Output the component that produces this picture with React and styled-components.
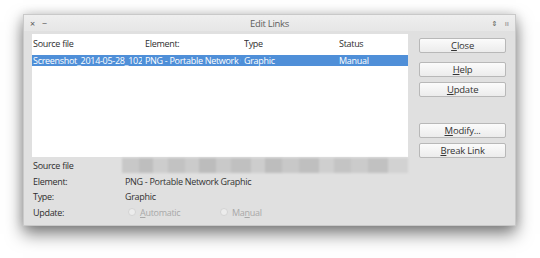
import React from 'react'
import styled, { createGlobalStyle } from 'styled-components'

const Global = createGlobalStyle`
  html, body {
    margin: 0;
    background: #ffffff;
  }
  body {
    font-family: "Open Sans", "DejaVu Sans", sans-serif;
    font-size: 9px;
    letter-spacing: -0.3px;
    color: #333;
  }
`

const Page = styled.div`
  width: 540px;
  height: 258px;
  padding: 14px 0 0 23px;
  box-sizing: border-box;
`

const Window = styled.div`
  width: 493px;
  height: 212px;
  background: #e0e0e0;
  border: 1px solid #c9c9c9;
  box-sizing: border-box;
  display: flex;
  flex-direction: column;
  box-shadow: 0 8px 16px rgba(0, 0, 0, 0.5), 0 0 10px rgba(0, 0, 0, 0.15);
`

const TitleBar = styled.div`
  height: 16px;
  display: grid;
  grid-template-columns: 60px 1fr 60px;
  align-items: center;
  background: linear-gradient(#efefef, #e6e6e6);
  color: #5e5e5e;
  font-size: 9.5px;
`

const Controls = styled.div`
  display: flex;
  gap: 7px;
  padding: 0 6px;
  justify-content: ${p => (p.$right ? 'flex-end' : 'flex-start')};
  color: #555;
  font-size: ${p => (p.$right ? '7px' : '9px')};
`

const Title = styled.div`
  text-align: center;
`

const Body = styled.div`
  flex: 1;
  display: flex;
  gap: 11px;
  padding: 3px 9px 0 8px;
`

const Left = styled.div`
  width: 377px;
  display: flex;
  flex-direction: column;
`

const List = styled.div`
  height: 123px;
  background: #ffffff;
  display: flex;
  flex-direction: column;
`

const Row = styled.div`
  display: grid;
  grid-template-columns: 112px 99px 95px 1fr;
  height: ${p => (p.$head ? '19px' : '11px')};
  align-items: center;
  padding-left: 1px;
  background: ${p => (p.$selected ? '#4f8fd8' : 'transparent')};
  color: ${p => (p.$selected ? '#ffffff' : '#2e2e2e')};
  margin-top: ${p => (p.$head ? '0' : '2px')};
  span {
    white-space: nowrap;
    overflow: hidden;
    margin-right: 3px;
  }
`

const Details = styled.div`
  display: grid;
  grid-template-columns: 90px 1fr;
  grid-auto-rows: 15.5px;
  align-items: center;
  margin-top: 1px;
`

const Label = styled.div`
  padding-left: 1px;
  color: #2e2e2e;
`

const Value = styled.div`
  padding-left: 3px;
  white-space: nowrap;
`

const Blurred = styled.div`
  height: 15px;
  background: linear-gradient(90deg,
    #c8c8c8 0 6%, #bebebe 6% 11%, #cdcdcd 11% 16%, #c2c2c2 16% 22%,
    #cbcbcb 22% 27%, #bcbcbc 27% 33%, #c9c9c9 33% 38%, #c0c0c0 38% 45%,
    #cdcdcd 45% 50%, #bdbdbd 50% 56%, #c8c8c8 56% 62%, #bfbfbf 62% 69%,
    #cfcfcf 69% 74%, #c4c4c4 74% 80%, #cbcbcb 80% 86%, #c1c1c1 86% 93%,
    #d2d2d2 93% 100%);
  filter: blur(0.8px);
`

const Radios = styled.div`
  display: flex;
  align-items: center;
  padding-left: 6px;
  color: #a8a8a8;
`

const Radio = styled.label`
  display: flex;
  align-items: center;
  gap: 4px;
  width: ${p => p.$w}px;
  &::before {
    content: '';
    width: 6px;
    height: 6px;
    border-radius: 50%;
    background: #ececec;
    border: 1px solid #d4d4d4;
  }
`

const Buttons = styled.div`
  width: 87px;
  display: flex;
  flex-direction: column;
  padding-top: 4px;
`

const Button = styled.button`
  height: 15px;
  margin-top: ${p => p.$gap}px;
  padding: 0;
  border: 1px solid #b8b8b8;
  border-radius: 2px;
  background: linear-gradient(#fbfbfb, #ececec);
  font-family: inherit;
  font-size: 9.5px;
  letter-spacing: -0.2px;
  color: #333;
  line-height: 13px;
`

const buttons = [
  { label: 'lose', key: 'C', gap: 0 },
  { label: 'elp', key: 'H', gap: 9 },
  { label: 'pdate', key: 'U', gap: 5 },
  { label: 'odify...', key: 'M', gap: 26 },
  { label: 'reak Link', key: 'B', gap: 5 },
]

export default function App() {
  return (
    <Page>
      <Global />
      <Window>
        <TitleBar>
          <Controls>
            <span>×</span>
            <span>−</span>
          </Controls>
          <Title>Edit Links</Title>
          <Controls $right>
            <span>⇕</span>
            <span>⠶</span>
          </Controls>
        </TitleBar>
        <Body>
          <Left>
            <List>
              <Row $head>
                <span>Source file</span>
                <span>Element:</span>
                <span>Type</span>
                <span>Status</span>
              </Row>
              <Row $selected>
                <span>Screenshot_2014-05-28_102528.png</span>
                <span>PNG - Portable Network Graphic</span>
                <span>Graphic</span>
                <span>Manual</span>
              </Row>
            </List>
            <Details>
              <Label>Source file</Label>
              <Blurred />
              <Label>Element:</Label>
              <Value>PNG - Portable Network Graphic</Value>
              <Label>Type:</Label>
              <Value>Graphic</Value>
              <Label>Update:</Label>
              <Radios>
                <Radio $w={92}><span><u>A</u>utomatic</span></Radio>
                <Radio><span>Ma<u>n</u>ual</span></Radio>
              </Radios>
            </Details>
          </Left>
          <Buttons>
            {buttons.map(b => (
              <Button key={b.key} $gap={b.gap}>
                <u>{b.key}</u>{b.label}
              </Button>
            ))}
          </Buttons>
        </Body>
      </Window>
    </Page>
  )
}
